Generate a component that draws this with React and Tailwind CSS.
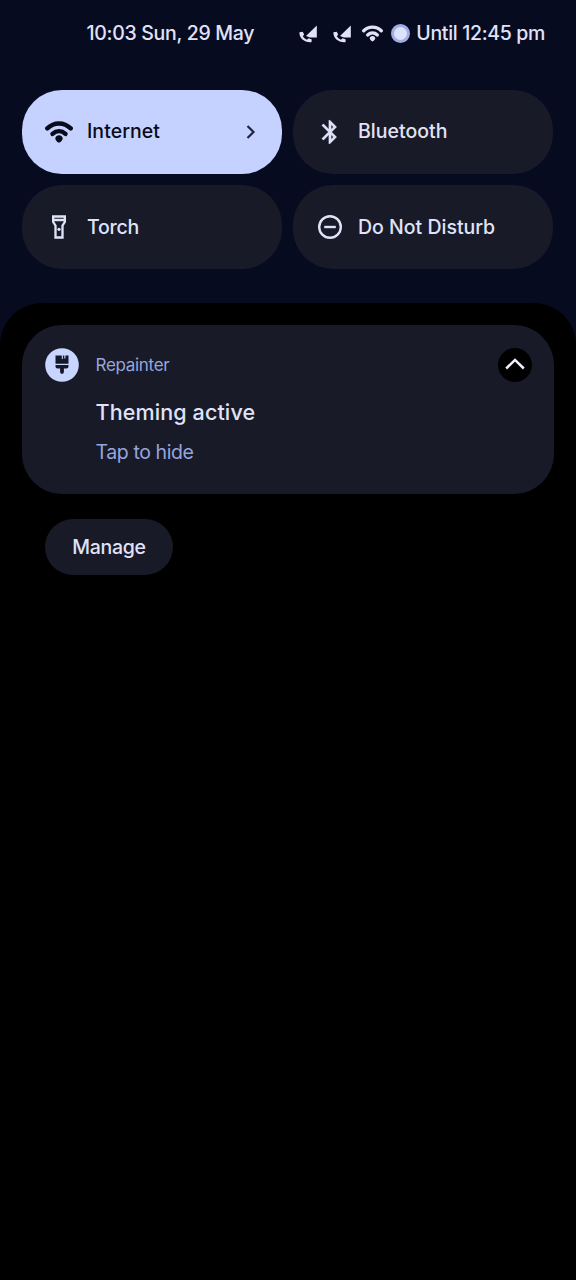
import React from 'react';

function Wifi({ className }) {
  return (
    <svg viewBox="0 0 28 22" className={className} fill="none" stroke="currentColor" strokeWidth="4.400" strokeLinecap="round">
      <path d="M2.300 7.400C9 .8 19 .8 25.700 7.400" />
      <path d="M7.500 12.900C11.400 9.300 16.600 9.300 20.500 12.900" />
      <path d="M14 14.300c2.200 0 3.700 1.400 3.700 3.100 0 1.500-2.300 4.100-3.700 4.100s-3.700-2.600-3.700-4.100c0-1.700 1.500-3.100 3.700-3.100z" fill="currentColor" stroke="none" />
    </svg>
  );
}

function CallSignal() {
  return (
    <svg viewBox="0 0 20 20" className="h-5 w-5" fill="currentColor">
      <path d="M17.800 1.500V13.600H11L7 11.900z" />
      <path d="M.4 8.300l3.300-.6 1.500 2.800-1.400 1.700c1 1.600 2.300 2.700 4.100 3.500l1.700-1.500 3.200 1.300-.4 2.700C5.900 18.800.1 14.600.4 8.300z" />
    </svg>
  );
}

function Bluetooth() {
  return (
    <svg viewBox="0 0 24 24" className="h-7 w-7" fill="currentColor" stroke="currentColor" strokeWidth=".3">
      <path d="M17.710 7.710L12 2h-1v7.590L6.410 5 5 6.410 10.590 12 5 17.590 6.410 19 11 14.410V22h1l5.710-5.710-4.300-4.290 4.300-4.290zM13 5.830l1.880 1.880L13 9.590V5.830zm1.880 10.460L13 18.170v-3.760l1.880 1.880z" />
    </svg>
  );
}

function Torch() {
  return (
    <svg viewBox="0 0 24 24" className="h-7 w-7" fill="currentColor" fillRule="evenodd">
      <path d="M18 2H6v6l2 3v11h8V11l2-3V2zm-2 2v1H8V4h8zm-2 6.400V20h-4v-9.600L8 7.400V7h8v.4l-2 3z" />
      <circle cx="12" cy="14" r="1.400" />
    </svg>
  );
}

function DoNotDisturb() {
  return (
    <svg viewBox="0 0 28 28" className="h-7 w-7" fill="none" stroke="currentColor" strokeWidth="2.400">
      <circle cx="14" cy="14" r="10.800" />
      <path d="M8.200 14h11.600" />
    </svg>
  );
}

function Tile({ icon, label, spacing, active }) {
  return (
    <div
      className={
        'flex h-[84px] items-center rounded-[40px] pl-[22.500px] text-[19.500px] font-medium ' +
        (active ? 'bg-[#c5d2ff] text-[#070b1c]' : 'bg-[#181a28] text-[#e0e3f8]')
      }
    >
      <span className="flex h-7 w-7 items-center justify-center">{icon}</span>
      <span className={'ml-[14.500px] whitespace-nowrap ' + spacing}>{label}</span>
      {active && (
        <svg viewBox="0 0 10 14" className="mr-[26px] ml-auto h-[14px] w-[10px]" fill="none" stroke="#20263e" strokeWidth="2.200">
          <path d="M1.500 1l6 6-6 6" />
        </svg>
      )}
    </div>
  );
}

export default function App() {
  return (
    <div className="flex h-[1280px] w-[576px] flex-col bg-[#070b20] font-['Inter','Roboto',sans-serif] text-[#e0e3f8]">
      <header className="flex h-[67px] items-center pr-[31px] pl-[86.500px] text-[19.500px] font-medium whitespace-nowrap">
        <span className="pt-px tracking-[-0.300px]">10:03 Sun, 29 May</span>
        <div className="ml-auto flex items-center">
          <CallSignal />
          <span className="ml-[14px] flex"><CallSignal /></span>
          <Wifi className="ml-[9px] h-[17px] w-[21px]" />
          <span className="ml-2 h-[19px] w-[19px] rounded-full border-[3px] border-[#a3ade5] bg-[#dde2fb]" />
          <span className="ml-[6px] pt-px tracking-[-0.330px]">Until 12:45 pm</span>
        </div>
      </header>

      <section className="mx-[22px] mt-[23px] grid w-[531px] grid-cols-2 gap-[11px]">
        <Tile active icon={<Wifi className="h-[22px] w-7" />} label="Internet" spacing="tracking-[0.050px]" />
        <Tile icon={<Bluetooth />} label="Bluetooth" spacing="tracking-[0.020px]" />
        <Tile icon={<Torch />} label="Torch" spacing="pt-px tracking-[-0.200px]" />
        <Tile icon={<DoNotDisturb />} label="Do Not Disturb" spacing="pt-px tracking-[0px]" />
      </section>

      <main className="mt-[34px] flex-1 rounded-t-[42px] bg-black px-[22px] pt-[22px]">
        <article className="flex h-[169px] rounded-[40px] bg-[#181a28] pr-[22.500px] pl-[22.500px] pt-[22.500px]">
          <svg viewBox="0 0 34 34" className="h-[34px] w-[34px] shrink-0">
            <circle cx="17" cy="17" r="16.800" fill="#c8d5ff" />
            <path d="M10.500 7.500H16.800V11H17.900V7.500H19.300V10.500H20.400V7.500H23.500V15.700H10.500zM10.500 17h13v1.500q0 2-2 2h-2.600v3.600q0 1.800-1.900 1.800t-1.900-1.800v-3.600h-2.600q-2 0-2-2z" fill="#151827" />
          </svg>
          <div className="ml-[17px] flex flex-col whitespace-nowrap">
            <p className="flex h-[34px] items-center pt-[2px] text-[17px] tracking-[-0.300px] text-[#97a5dc]">Repainter</p>
            <h2 className="mt-[15px] text-[21.500px] leading-[30px] font-medium tracking-[0.120px]">Theming active</h2>
            <p className="mt-[10px] text-[19.500px] leading-[30px] tracking-[-0.400px] text-[#97a5dc]">Tap to hide</p>
          </div>
          <span className="ml-auto flex h-[34px] w-[34px] items-center justify-center rounded-full bg-black">
            <svg viewBox="0 0 34 34" className="h-[34px] w-[34px]" fill="none" stroke="#eef0fc" strokeWidth="2.500">
              <path d="M8.200 20.500L17 11.900l8.800 8.600" />
            </svg>
          </span>
        </article>
        <button className="mt-[25px] ml-[23px] flex h-14 w-[128px] items-center justify-center rounded-full bg-[#181a28] pt-px text-[19.500px] font-medium tracking-[-0.300px]">
          Manage
        </button>
      </main>
    </div>
  );
}
